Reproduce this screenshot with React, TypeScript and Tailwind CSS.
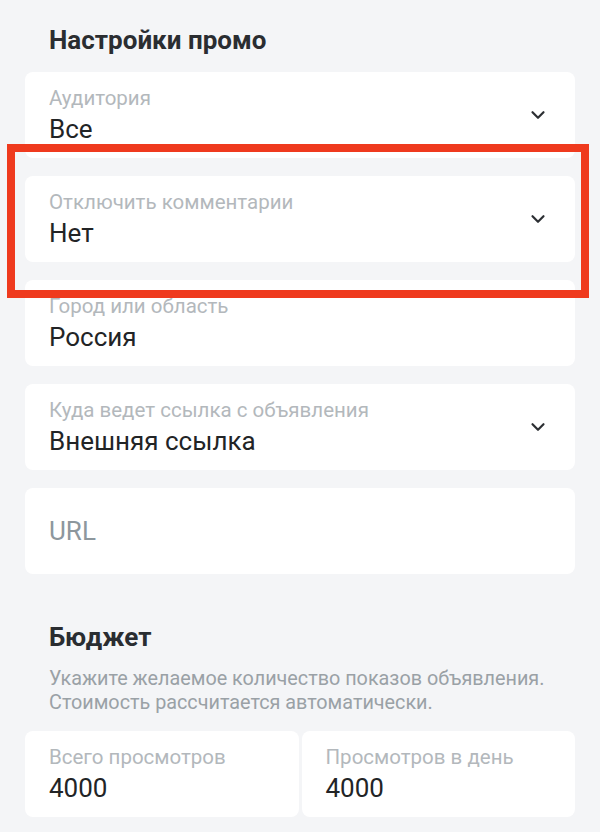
import { ChevronDown } from 'lucide-react'

interface FieldProps {
  label?: string
  value: string
  select?: boolean
  placeholder?: boolean
}

function Field({ label, value, select, placeholder }: FieldProps) {
  return (
    <div className="flex items-center justify-between h-[86px] rounded-lg bg-white pl-6 pr-[26px]">
      <div className="flex flex-col min-w-0">
        {label && (
          <span className="mb-[3px] text-[20.5px] leading-[24px] text-[#b3b8bc] truncate">{label}</span>
        )}
        <span
          className={
            placeholder
              ? 'text-[26px] leading-[32px] text-[#8d979d]'
              : 'text-[26px] leading-[32px] text-[#222426]'
          }
        >
          {value}
        </span>
      </div>
      {select && <ChevronDown size={22} strokeWidth={2.4} className="text-[#2c2f33] shrink-0" />}
    </div>
  )
}

export default function App() {
  return (
    <div
      className="relative w-[600px] h-[832px] overflow-hidden bg-[#f4f5f7] px-[25px]"
      style={{ fontFamily: 'Roboto, "Noto Sans", sans-serif' }}
    >
      <h2 className="pt-[24px] pl-6 text-[26px] leading-[32px] font-bold text-[#2a2d31]">
        Настройки промо
      </h2>

      <div className="mt-4 flex flex-col gap-[18px]">
        <Field label="Аудитория" value="Все" select />
        <Field label="Отключить комментарии" value="Нет" select />
        <Field label="Город или область" value="Россия" />
        <Field label="Куда ведет ссылка с объявления" value="Внешняя ссылка" select />
        <Field value="URL" placeholder />
      </div>

      <h2 className="mt-[47px] pl-6 text-[26px] leading-[32px] font-bold text-[#2a2d31]">
        Бюджет
      </h2>
      <p className="mt-[14px] pl-6 text-[19.8px] leading-[24px] text-[#9aa1a6]">
        Укажите желаемое количество показов объявления.
        <br />
        Стоимость рассчитается автоматически.
      </p>

      <div className="mt-[16px] grid grid-cols-2 gap-[3px]">
        <Field label="Всего просмотров" value="4000" />
        <Field label="Просмотров в день" value="4000" />
      </div>

      {/* annotation frame */}
      <div className="absolute left-[7px] top-[144px] w-[582px] h-[154px] border-[8px] border-[#ef3a1e] pointer-events-none" />
    </div>
  )
}
